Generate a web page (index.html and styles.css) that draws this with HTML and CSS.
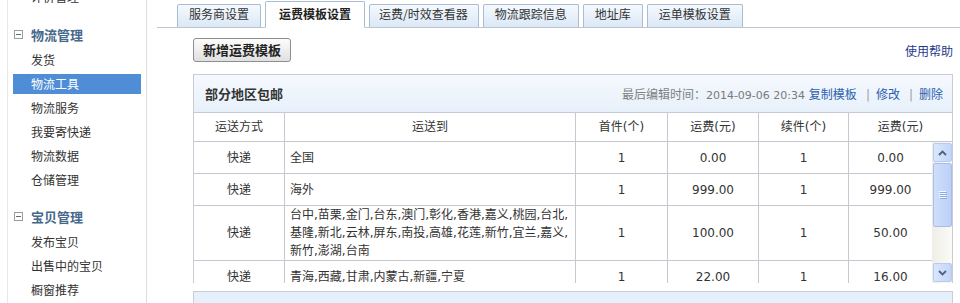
FILE: index.html
```html
<!DOCTYPE html>
<html lang="zh-CN">
<head>
<meta charset="utf-8">
<title>物流工具 - 运费模板设置</title>
<link rel="stylesheet" href="styles.css">
</head>
<body>
<div class="page">
  <aside class="sidebar">
    <div class="group group-cut">
      <a class="item">评价管理</a>
    </div>
    <div class="group">
      <div class="group-title"><svg class="fold" width="9" height="9" viewBox="0 0 9 9"><rect x="0.5" y="0.5" width="8" height="8" fill="#fff" stroke="#9b9b9b"/><path d="M2 4.5h5" stroke="#6a6a6a"/></svg>物流管理</div>
      <a class="item">发货</a>
      <a class="item active">物流工具</a>
      <a class="item">物流服务</a>
      <a class="item">我要寄快递</a>
      <a class="item">物流数据</a>
      <a class="item">仓储管理</a>
    </div>
    <div class="group">
      <div class="group-title"><svg class="fold" width="9" height="9" viewBox="0 0 9 9"><rect x="0.5" y="0.5" width="8" height="8" fill="#fff" stroke="#9b9b9b"/><path d="M2 4.5h5" stroke="#6a6a6a"/></svg>宝贝管理</div>
      <a class="item">发布宝贝</a>
      <a class="item">出售中的宝贝</a>
      <a class="item">橱窗推荐</a>
    </div>
  </aside>

  <main class="main">
    <nav class="tabs">
      <a class="tab">服务商设置</a>
      <a class="tab active">运费模板设置</a>
      <a class="tab tab-wide">运费/时效查看器</a>
      <a class="tab">物流跟踪信息</a>
      <a class="tab">地址库</a>
      <a class="tab">运单模板设置</a>
    </nav>

    <div class="content">
      <div class="toolbar">
        <button class="btn" type="button">新增运费模板</button>
        <a class="help">使用帮助</a>
      </div>

      <section class="panel">
        <header class="panel-head">
          <h3 class="panel-title">部分地区包邮</h3>
          <div class="meta">最后编辑时间：<span class="date">2014-09-06 20:34</span> <a class="link">复制模板</a><span class="sep">|</span><a class="link">修改</a><span class="sep">|</span><a class="link">删除</a></div>
        </header>

        <div class="row head-row">
          <div class="cell">运送方式</div>
          <div class="cell">运送到</div>
          <div class="cell">首件(个)</div>
          <div class="cell">运费(元)</div>
          <div class="cell">续件(个)</div>
          <div class="cell">运费(元)</div>
        </div>

        <div class="body">
          <div class="rows">
            <div class="row">
              <div class="cell">快递</div>
              <div class="cell dest">全国</div>
              <div class="cell">1</div>
              <div class="cell">0.00</div>
              <div class="cell">1</div>
              <div class="cell">0.00</div>
            </div>
            <div class="row">
              <div class="cell">快递</div>
              <div class="cell dest">海外</div>
              <div class="cell">1</div>
              <div class="cell">999.00</div>
              <div class="cell">1</div>
              <div class="cell">999.00</div>
            </div>
            <div class="row row-tall">
              <div class="cell">快递</div>
              <div class="cell dest">台中,苗栗,金门,台东,澳门,彰化,香港,嘉义,桃园,台北,基隆,新北,云林,屏东,南投,高雄,花莲,新竹,宜兰,嘉义,新竹,澎湖,台南</div>
              <div class="cell">1</div>
              <div class="cell">100.00</div>
              <div class="cell">1</div>
              <div class="cell">50.00</div>
            </div>
            <div class="row">
              <div class="cell">快递</div>
              <div class="cell dest">青海,西藏,甘肃,内蒙古,新疆,宁夏</div>
              <div class="cell">1</div>
              <div class="cell">22.00</div>
              <div class="cell">1</div>
              <div class="cell">16.00</div>
            </div>
          </div>

          <div class="scrollbar">
            <div class="sb-btn"><svg width="9" height="6" viewBox="0 0 9 6"><path d="M1 5l3.5-3.5L8 5" fill="none" stroke="#4d6185" stroke-width="1.8"/></svg></div>
            <div class="sb-thumb"><svg width="8" height="8" viewBox="0 0 8 8"><path d="M0 0.5h7M0 2.5h7M0 4.5h7M0 6.5h7" stroke="#f4f8ff"/><path d="M1 1.5h7M1 3.5h7M1 5.5h7M1 7.5h7" stroke="#8eaae4"/></svg></div>
            <div class="sb-track"></div>
            <div class="sb-btn"><svg width="9" height="6" viewBox="0 0 9 6"><path d="M1 1l3.5 3.5L8 1" fill="none" stroke="#4d6185" stroke-width="1.8"/></svg></div>
          </div>
        </div>
      </section>

      <section class="panel panel-next"></section>
    </div>
  </main>
</div>
</body>
</html>
```

FILE: styles.css
```css
html, body {
  margin: 0;
  padding: 0;
  background: #fff;
}

body {
  font-family: "DejaVu Sans", "Noto Sans CJK SC", sans-serif;
  font-size: 12px;
  color: #333;
  height: 303px;
  overflow: hidden;
}

a {
  text-decoration: none;
  cursor: pointer;
}

.page {
  display: flex;
  align-items: flex-start;
  height: 303px;
}

/* ---------- sidebar ---------- */
.sidebar {
  flex: none;
  width: 138px;
  height: 303px;
  margin-left: 7px;
  border-left: 1px solid #e8e8e8;
  border-right: 1px solid #dedede;
  font-family: "Noto Sans CJK SC", sans-serif;
}

.group {
  display: flex;
  flex-direction: column;
  margin-bottom: 10px;
}

.group-cut {
  margin-top: -15px;
  margin-bottom: 11px;
}

.group-title {
  display: flex;
  align-items: center;
  height: 28px;
  padding-left: 6px;
  font-size: 13px;
  font-weight: bold;
  color: #45688b;
}

.fold {
  flex: none;
  margin-right: 8px;
}

.item {
  display: block;
  height: 20px;
  line-height: 20px;
  margin: 2px 5px;
  padding-left: 18px;
  color: #333;
  font-size: 12px;
}

.item.active {
  background: #4f8ed6;
  color: #fff;
}

/* ---------- main ---------- */
.main {
  flex: 1;
  min-width: 0;
  margin-left: 10px;
}

.tabs {
  display: flex;
  align-items: flex-end;
  gap: 4px;
  height: 28px;
  box-sizing: border-box;
  padding: 1px 0 0 20px;
  border-bottom: 1px solid #bcc5d0;
  font-family: "Noto Sans CJK SC", sans-serif;
}

.tab {
  height: 23px;
  box-sizing: border-box;
  padding: 0 11px;
  line-height: 18px;
  border: 1px solid #a9bcd2;
  border-bottom: none;
  border-radius: 2px 2px 0 0;
  background: linear-gradient(#f5f9fe, #dbe8f6);
  color: #333;
  white-space: nowrap;
}

.tab-wide {
  padding: 0 10px 0 9px;
}

.tab.active {
  height: 27px;
  margin-bottom: -1px;
  padding: 0 13px;
  line-height: 24px;
  background: #fff;
  border-bottom: 1px solid #fff;
  font-weight: bold;
  color: #222;
}

.content {
  padding: 10px 7px 0 36px;
}

.toolbar {
  display: flex;
  align-items: center;
  justify-content: space-between;
  height: 24px;
}

.btn {
  height: 24px;
  box-sizing: border-box;
  padding: 0 9px;
  border: 1px solid #8e8e8e;
  border-radius: 3px;
  background: linear-gradient(#fcfcfc, #e0e0e0);
  font-family: "Noto Sans CJK SC", sans-serif;
  font-size: 13px;
  font-weight: bold;
  color: #222;
  line-height: 20px;
}

.help {
  font-family: "Noto Sans CJK SC", sans-serif;
  color: #1e3a8c;
}

/* ---------- panel ---------- */
.panel {
  margin-top: 12px;
  border: 1px solid #c9ccd6;
  border-bottom: none;
}

.panel-head {
  display: flex;
  align-items: center;
  justify-content: space-between;
  height: 38px;
  box-sizing: border-box;
  padding: 0 9px 0 11px;
  border-bottom: 1px solid #c6cad4;
  background: linear-gradient(#f6f9fe, #e7f0fa);
}

.panel-title {
  margin: 0;
  font-family: "Noto Sans CJK SC", sans-serif;
  font-size: 13px;
  font-weight: bold;
  color: #333;
}

.meta {
  color: #808080;
  white-space: nowrap;
}

.meta .date {
  font-size: 11px;
  color: #7a7a7a;
}

.meta .link {
  color: #2c5fae;
}

.meta .sep {
  color: #a0a0a0;
  margin: 0 6px 0 9px;
}

.row {
  display: grid;
  grid-template-columns: 91px 291px 92px 91px 90px 1fr;
  border-bottom: 1px solid #c7c7cf;
  height: 32px;
  box-sizing: border-box;
}

.head-row {
  height: 29px;
}

.row-tall {
  height: 55px;
}

.cell {
  display: flex;
  align-items: center;
  justify-content: center;
  box-sizing: border-box;
  border-right: 1px solid #c7c7cf;
  color: #333;
  line-height: 18px;
  min-width: 0;
}

.cell:last-child {
  border-right: none;
}

.cell.dest {
  justify-content: flex-start;
  padding: 0 4px 0 5px;
  text-align: left;
}

.body {
  display: flex;
  height: 141px;
  overflow: hidden;
}

.rows {
  flex: 1;
  min-width: 0;
}

/* ---------- scrollbar ---------- */
.scrollbar {
  flex: none;
  width: 20px;
  box-sizing: border-box;
  padding: 1px 0 1px 1px;
  display: flex;
  flex-direction: column;
  gap: 1px;
  background: linear-gradient(90deg, #eeede6, #fbfbf8);
}

.sb-btn {
  height: 19px;
  box-sizing: border-box;
  border: 1px solid #b8cbee;
  border-radius: 2px;
  background: linear-gradient(90deg, #dae6fc, #c3d5f8);
  display: flex;
  align-items: center;
  justify-content: center;
}

.sb-thumb {
  height: 64px;
  box-sizing: border-box;
  border: 1px solid #a8bee9;
  border-radius: 2px;
  background: linear-gradient(90deg, #cfdefb, #bcd0f7);
  display: flex;
  align-items: center;
  justify-content: center;
}

.sb-track {
  flex: 1;
}

.panel-next {
  margin-top: 8px;
  height: 30px;
  border-bottom: 1px solid #c9ccd6;
  background: #e6f0fb;
}
```
